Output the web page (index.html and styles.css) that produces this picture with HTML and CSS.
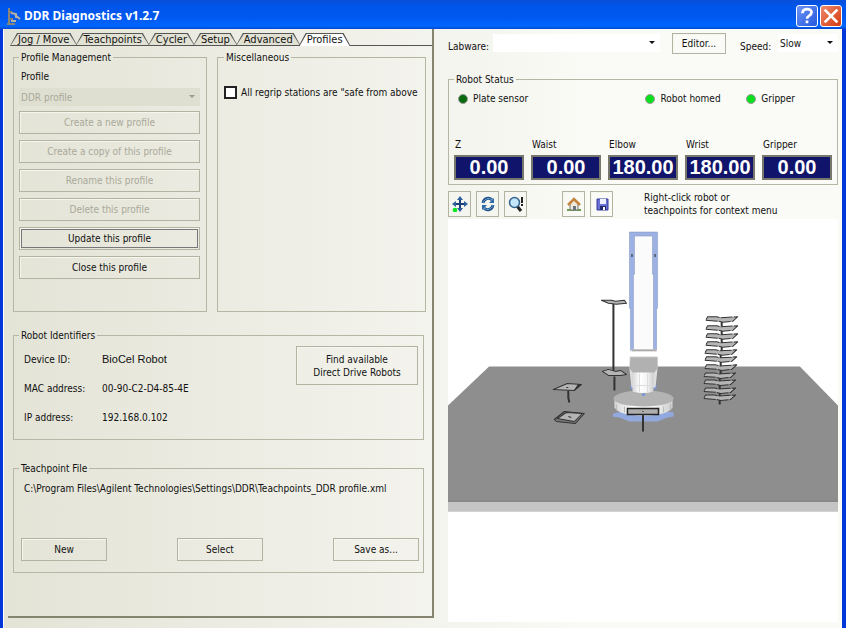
FILE: index.html
```html
<!DOCTYPE html>
<html lang="en">
<head>
<meta charset="utf-8">
<title>DDR Diagnostics v1.2.7</title>
<link rel="stylesheet" href="styles.css">
</head>
<body>
<div class="window">
  <header class="titlebar">
    <svg class="app-icon" viewBox="0 0 16 20" aria-hidden="true">
      <path d="M3 2v16M3 6h3M1 18h8M3 13h4" stroke="#8b8577" stroke-width="2" fill="none"/>
      <path d="M5 7l5 1v4M9 9l5 4M5 15h5" stroke="#b9b3a4" stroke-width="2" fill="none"/>
    </svg>
    <h1>DDR Diagnostics v1.2.7</h1>
    <button class="caption help" aria-label="Help"><svg viewBox="0 0 22 22"><path d="M6 8c0-6 10-6 10-1 0 4-5 3-5 7M11 16v3" fill="none" stroke="#fff" stroke-width="3"/></svg></button>
    <button class="caption close" aria-label="Close"><svg viewBox="0 0 22 22"><path d="M4 4l14 14M18 4L4 18" fill="none" stroke="#fff" stroke-width="3"/></svg></button>
  </header>
  <main class="content">
    <section class="left">
      <nav class="tabs" role="tablist">
        <button role="tab" class="tab">Jog / Move</button>
        <button role="tab" class="tab">Teachpoints</button>
        <button role="tab" class="tab">Cycler</button>
        <button role="tab" class="tab">Setup</button>
        <button role="tab" class="tab">Advanced</button>
        <button role="tab" class="tab active" aria-selected="true">Profiles</button>
        <span class="tab-line"></span>
      </nav>
      <div class="panel">
        <div class="top-groups">
          <fieldset class="group profile">
            <legend>Profile Management</legend>
            <label for="profile">Profile</label>
            <span class="pick muted"><select id="profile" disabled><option>DDR profile</option></select></span>
            <div class="stack">
              <button class="btn" disabled>Create a new profile</button>
              <button class="btn" disabled>Create a copy of this profile</button>
              <button class="btn" disabled>Rename this profile</button>
              <button class="btn" disabled>Delete this profile</button>
              <button class="btn default">Update this profile</button>
              <button class="btn">Close this profile</button>
            </div>
          </fieldset>
          <fieldset class="group misc">
            <legend>Miscellaneous</legend>
            <label class="check"><input type="checkbox"><span>All regrip stations are "safe from above</span></label>
          </fieldset>
        </div>
        <fieldset class="group">
          <legend>Robot Identifiers</legend>
          <div class="ids">
            <dl>
              <dt>Device ID:</dt><dd class="device">BioCel Robot</dd>
              <dt>MAC address:</dt><dd>00-90-C2-D4-85-4E</dd>
              <dt>IP address:</dt><dd>192.168.0.102</dd>
            </dl>
            <button class="btn find">Find available<br>Direct Drive Robots</button>
          </div>
        </fieldset>
        <fieldset class="group">
          <legend>Teachpoint File</legend>
          <div class="file">
            <p>C:\Program Files\Agilent Technologies\Settings\DDR\Teachpoints_DDR profile.xml</p>
            <div class="file-actions">
              <button class="btn">New</button>
              <button class="btn">Select</button>
              <button class="btn">Save as...</button>
            </div>
          </div>
        </fieldset>
      </div>
    </section>
    <section class="right">
      <div class="bar">
        <label for="labware">Labware:</label>
        <span class="pick labware"><select id="labware"><option></option></select></span>
        <button class="btn editor">Editor...</button>
        <label for="speed">Speed:</label>
        <span class="pick speed"><select id="speed"><option>Slow</option></select></span>
      </div>
      <fieldset class="group status">
        <legend>Robot Status</legend>
        <div class="leds">
          <span class="led off">Plate sensor</span>
          <span class="led">Robot homed</span>
          <span class="led">Gripper</span>
        </div>
        <div class="readouts">
          <div><span>Z</span><output>0.00</output></div>
          <div><span>Waist</span><output>0.00</output></div>
          <div><span>Elbow</span><output>180.00</output></div>
          <div><span>Wrist</span><output>180.00</output></div>
          <div><span>Gripper</span><output>0.00</output></div>
        </div>
      </fieldset>
      <div class="tools">
        <button class="btn tool" aria-label="Pan"><svg viewBox="0 0 16 16"><path d="M8 2v12M2 8h12" stroke="#1d3f78" stroke-width="2"/><path d="M8 0l3 4H5zM8 16l3-4H5zM0 8l4-3v6zM16 8l-4-3v6z" fill="#2d5e9e"/><circle cx="3" cy="14" r="2.3" fill="#0de61c"/></svg></button>
        <button class="btn tool" aria-label="Rotate"><svg viewBox="0 0 16 16"><path d="M3 7c1-5 6-6 9-3M13 9c-1 5-6 6-9 3" fill="none" stroke="#1f4f88" stroke-width="3"/><path d="M3 7c1-4 6-6 9-3M13 9c-1 4-6 6-9 3" fill="none" stroke="#69a8dc" stroke-width="1"/><path d="M14 2v5H9zM2 14V9h5z" fill="#2b69a8"/></svg></button>
        <button class="btn tool" aria-label="Zoom"><svg viewBox="0 0 16 16"><path d="M9 10l4 5" stroke="#222" stroke-width="3"/><circle cx="6.500" cy="6.500" r="5" fill="#c5e6fa" stroke="#35648f" stroke-width="1.500"/><path d="M14 1v6M14 8v2" stroke="#222" stroke-width="2"/></svg></button>
        <button class="btn tool home" aria-label="Home"><svg viewBox="0 0 16 16"><path d="M1 13h14v2H1z" fill="#6a9c4c"/><path d="M4 8l4-4 4 4v6H4z" fill="#eee9d8" stroke="#777"/><path d="M2 9l6-6 6 6" fill="none" stroke="#c4843e" stroke-width="2.500"/><path d="M7 10h3v4H7z" fill="#6c7480"/></svg></button>
        <button class="btn tool" aria-label="Save"><svg viewBox="0 0 16 16"><path d="M3 3h11v11H3z" fill="#6a70d4" stroke="#34389a"/><path d="M6 3h6v5H6z" fill="#eef0ff"/><path d="M6 10h6v4H6z" fill="#23276e"/><path d="M9 11h2v3H9z" fill="#fff"/></svg></button>
        <p>Right-click robot or<br>teachpoints for context menu</p>
      </div>
      <div class="view">
        <svg viewBox="448 219 389 402" role="img" aria-label="Robot workspace">
          <defs>
            <linearGradient id="body" x1="0" x2="1"><stop offset="0" stop-color="#d5d5d5"/><stop offset=".35" stop-color="#fff"/><stop offset=".7" stop-color="#f4f4f4"/><stop offset="1" stop-color="#ccc"/></linearGradient>
            <g id="slot"><path d="M0 0v7" stroke="#333" stroke-width="2"/><path d="M-14-2.500h9l4 1 17-1-5 4.500-10 1-4-1-13-1z" fill="#b5b5b5" stroke="#333" stroke-dasharray="12 1" stroke-linejoin="round"/></g>
          </defs>
          <path d="M448 405L489 366L799 366L837 405V501H448z" fill="#8e8e8e"/>
          <path d="M448 501h389v10H448z" fill="#c4c4c4"/>
          <path d="M448 500.500h389" stroke="#7c7c7c"/>
          <path d="M630 233h26v117h-26z" fill="#fbfbfb"/>
          <path d="M629 232h28v76h-1v42h-3V274h-1V236h-18v38h-1v76h-3v-42h-1z" fill="#9db2e2" stroke="#7d90c0" stroke-width=".5"/>
          <path d="M631.500 254v3M654.500 254v3" stroke="#222"/>
          <path d="M631 349h25v8h-25z" fill="#fff"/><path d="M631 349h25v2h-25z" fill="#aaa"/>
          <path d="M630 384h26v5h-26z" fill="#7791cc"/>
          <path d="M629 356h28v12l-2 19h-24l-2-19z" fill="#dedede"/>
          <path d="M630 357h27v11l-4 5h-20l-4-5z" fill="#b1b1b1"/>
          <path d="M613 413l-1 3 7 1 10 4h28l10-4 6-1v-4l-8-1h-44z" fill="#92a9df"/>
          <path d="M614 398v9q5 8 29 8t29-8v-9z" fill="url(#body)"/>
          <path d="M616 404v6M624 406v6M663 406v6M670 404v6" stroke="#b8b8b8"/>
          <ellipse cx="643" cy="398" rx="30" ry="8" fill="#b3b3b3"/>
          <path d="M632 372h21v19q-10 3-21 0z" fill="url(#body)"/>
          <path d="M632 385h21M639 373v19M647 373v19" stroke="#ddd"/>
          <circle cx="643" cy="394" r="1.500" fill="#6f92dd"/>
          <path d="M627 408h31v6h-31z" fill="#aeaeae" stroke="#222" stroke-width="1.500"/>
          <path d="M642 411h1" stroke="#222"/>
          <path d="M642.500 414v17" stroke="#333" stroke-width="2"/>
          <path d="M613 303v68M614 376v14" stroke="#333" stroke-width="2"/>
          <g stroke="#333" stroke-width="1" stroke-linejoin="round" fill="#b4b4b4">
            <path d="M601 300h10l4 1 9-1 2 3-10 1-8-1z"/>
            <path d="M602 371l6-2 7 2 5-1 6 4-6 1-12 0z"/>
            <path d="M568 390v7l1 5" stroke-width="2" fill="none"/>
            <path d="M553 389l14-6 14 1-7 6z"/><path d="M574 390l7-6-3 0z" fill="#333"/>
            <path d="M554 419l10-8 20 2-9 10-19-2z" fill="#777"/><path d="M557 418l9-6 16 1-8 8z"/>
            <path d="M566 387h2M568 416l3 1" fill="none"/>
          </g>
          <use href="#slot" x="721" y="319"/><use href="#slot" x="721" y="328"/><use href="#slot" x="721" y="336"/><use href="#slot" x="721" y="344"/><use href="#slot" x="720" y="352"/><use href="#slot" x="720" y="359"/><use href="#slot" x="720" y="367"/><use href="#slot" x="719" y="375"/><use href="#slot" x="719" y="382"/><use href="#slot" x="719" y="390"/><use href="#slot" x="719" y="397"/>
        </svg>
      </div>
    </section>
  </main>
</div>
</body>
</html>
```
FILE: styles.css
```css
* { box-sizing: border-box; }
body {
  margin: 0;
  font: 10px/13px "DejaVu Sans Condensed", "DejaVu Sans", sans-serif;
  color: #111;
}
h1, p, dl, dd { margin: 0; }
button, select, input { font: inherit; color: inherit; margin: 0; }
.window {
  display: flex;
  flex-direction: column;
  min-height: 100vh;
  border: solid #0037d8;
  border-width: 0 4px 0 3px;
  background: #0037d8;
}
.titlebar {
  display: flex;
  align-items: center;
  gap: 2px;
  height: 29px;
  margin: 0 -4px 0 -3px;
  padding: 3px 4px 0 6px;
  background: linear-gradient(#0a4fd8, #0055ea 20%, #0058f0 60%, #0066ff 90%, #0048d0);
}
.app-icon { width: 16px; height: 20px; }
.titlebar h1 {
  flex: 1;
  font: bold 12px/16px "Noto Sans", sans-serif;
  color: #fff;
}
.caption {
  width: 22px;
  height: 22px;
  padding: 0;
  border: 1px solid #fff;
  border-radius: 3px;
  background: linear-gradient(135deg, #6e93f5, #2458dc);
}
.caption svg { display: block; width: 20px; height: 20px; }
.caption.close { background: linear-gradient(135deg, #ee8a6c, #d63a10); }
.content {
  flex: 1;
  display: grid;
  grid-template-columns: minmax(0, 430fr) minmax(0, 408fr);
  padding-bottom: 6px;
  border-left: 1px solid #fff;
  border-bottom: 1px solid #b8b8b0;
  background: linear-gradient(90deg, #e3e3d6, #f4f4ee 52%, #fafaf6 70%);
}
.left {
  display: flex;
  flex-direction: column;
  border: solid #85856f;
  border-width: 0 2px 2px 0;
  margin: 0 0 4px 4px;
  padding-top: 4px;
}
.tabs { display: flex; height: 13px; padding-left: 2px; }
.tab {
  position: relative;
  z-index: 0;
  height: 13px;
  padding: 0 8px;
  margin-right: -2px;
  border: 0;
  background: #555;
  clip-path: polygon(0 100%, 7px 0, calc(100% - 7px) 0, 100% 100%);
  font-size: 11px;
  line-height: 14px;
  white-space: nowrap;
}
.tab::before {
  content: "";
  position: absolute;
  z-index: -1;
  inset: 1px;
  background: #e2e2d4;
  clip-path: polygon(0 100%, 7px 0, calc(100% - 7px) 0, 100% 100%);
}
.tab.active::before { background: #fff; bottom: 0; }
.tab-line { flex: 1; border-bottom: 1px solid #555; }
.panel {
  flex: 1;
  display: flex;
  flex-direction: column;
  padding: 5px 8px 20px 5px;
}
.group {
  min-width: 0;
  margin: 0;
  padding: 0 5px;
  border: 1px solid #b6b6a4;
}
.panel > .group { margin-top: 17px; }
.panel > .group + .group { margin-top: 22px; }
legend { padding: 0 2px; height: 13px; }
.top-groups {
  display: grid;
  grid-template-columns: 194fr 209fr;
  gap: 10px;
  height: 261px;
  margin-right: -2px;
}
.profile { display: flex; flex-direction: column; padding-right: 6px; }
.profile label { display: block; margin: 6px 2px 5px; }
.pick { position: relative; display: flex; height: 18px; background: #fff; }
.pick::after {
  content: "";
  position: absolute;
  right: 5px;
  top: 7px;
  border: solid transparent;
  border-width: 3px 3px 0;
  border-top-color: #111;
}
.pick select {
  appearance: none;
  flex: 1;
  width: 100%;
  padding: 0 2px;
  border: 0;
  background: none;
  opacity: 1;
}
.muted { background: #dfdfd1; color: #aaa999; }
.muted::after { border-top-color: #999; }
.stack { display: grid; gap: 6px; margin-top: 5px; }
.btn {
  height: 23px;
  padding: 0;
  border: 1px solid #b3b3a1;
  background: transparent;
  color: #111;
  box-shadow: inset 1px 1px #f6f6ee;
}
.btn:disabled { color: #aaa999; }
.btn.default { outline: 1px solid #77777a; outline-offset: -3px; }
.misc { padding: 0 6px; }
.check { display: flex; gap: 4px; margin-top: 22px; white-space: nowrap; align-items: center; }
.check input {
  appearance: none;
  flex: none;
  width: 13px;
  height: 13px;
  border: 2px solid #222;
  background: #fff;
}
.ids { display: flex; justify-content: space-between; height: 97px; }
.ids dl { display: grid; grid-template-columns: 78px auto; grid-auto-rows: 13px; row-gap: 16px; padding: 11px 0 0 5px; }
.device { font-family: "Liberation Sans", sans-serif; font-size: 11px; }
.find { width: 122px; height: 39px; margin-top: 4px; }
.file { height: 97px; padding-top: 7px; }
.file p { padding-left: 5px; white-space: nowrap; }
.file-actions { display: flex; justify-content: space-between; margin: 43px -1px 0 2px; }
.file-actions .btn { width: 86px; }
.right { display: flex; flex-direction: column; padding: 4px 4px 0 14px; }
.bar { display: flex; align-items: flex-start; height: 40px; }
.bar label { margin-top: 7px; min-width: 34px; }
.bar .pick { margin-top: 1px; }
.labware { flex: 1; margin-left: 4px; }
.editor { width: 54px; height: 21px; margin: 0 14px 0 12px; }
.speed { width: 60px; margin-left: 4px; }
.leds { display: grid; grid-template-columns: 188fr 101fr 82fr; margin: 6px 4px 0; }
.led { display: flex; align-items: center; gap: 5px; }
.led::before { content: ""; width: 8px; height: 8px; border: 1px solid #999; border-radius: 50%; background: #0be01d; }
.led.off::before { background: #0a6a10; }
.readouts { display: grid; grid-template-columns: repeat(5, minmax(0, 1fr)); gap: 7px; margin-top: 33px; padding-bottom: 4px; }
.readouts span { display: block; padding-left: 1px; }
.readouts output {
  display: block;
  height: 25px;
  margin-top: 4px;
  border: 2px solid #77776c;
  background: #10146a;
  color: #fff;
  font: bold 20px/21px "Liberation Sans", sans-serif;
  text-align: center;
}
.tools { display: flex; gap: 5px; margin-top: 6px; }
.tool { display: grid; place-items: center; width: 23px; height: 26px; }
.tool svg { width: 16px; height: 16px; }
.home { margin-left: 30px; }
.tools p { margin-left: 26px; }
.view { flex: 1; margin-top: 2px; background: #fff; }
.view svg { display: block; width: 100%; }
```
